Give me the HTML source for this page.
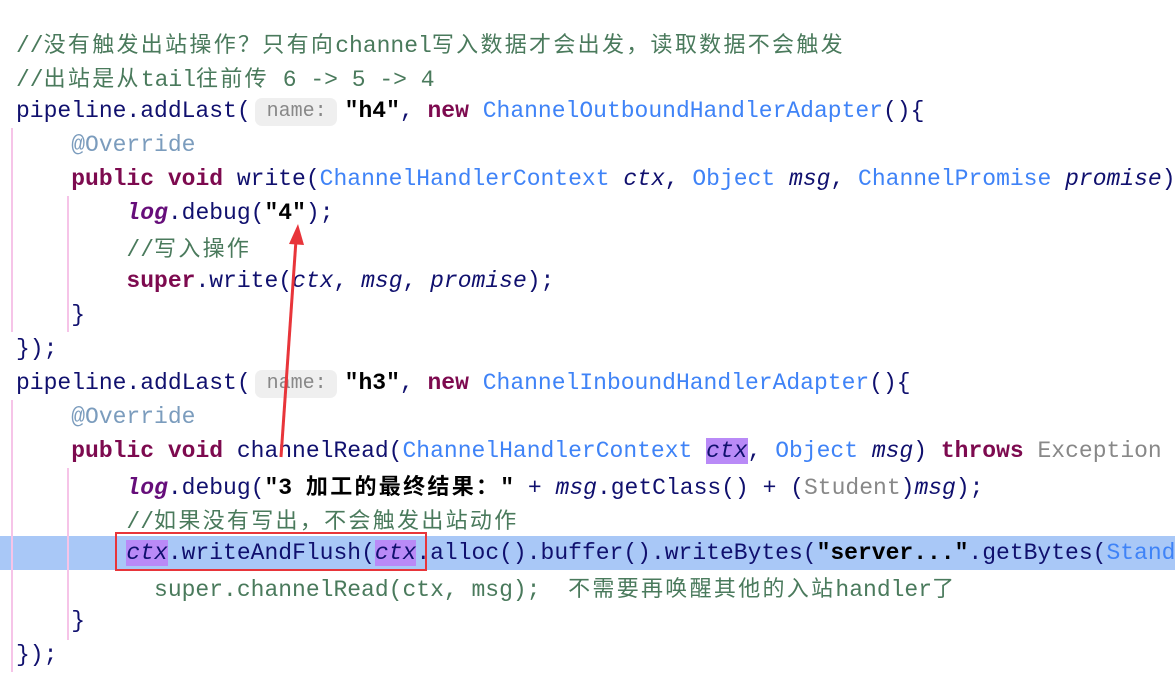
<!DOCTYPE html>
<html><head><meta charset="utf-8"><style>
body{margin:0;width:1175px;height:674px;background:#fff;position:relative;overflow:hidden;font-family:"Liberation Mono","Noto Sans CJK SC",monospace;font-size:23px;color:#10106e}
.l{position:absolute;left:16px;width:1159px;overflow:hidden;height:34px;line-height:34px;white-space:pre}
.k{color:#7d0a4f;font-weight:bold}.c{color:#3f83f7}.s{color:#000;font-weight:bold}.a{color:#7b9cbd}.i{font-style:italic}.lg{color:#660e7a;font-style:italic;font-weight:bold}
.cm{color:#4a7a5c}.z{font-family:"Noto Sans CJK SC",sans-serif;letter-spacing:2.3px;font-size:22px}
.h{display:inline-block;background:#efefef;color:#888;border-radius:7px;font-size:20px;line-height:28px;padding:0 10px 0 12px;margin:0 8px 0 4px;vertical-align:1px}
.g{position:absolute;width:2px;background:#f6c4e8}
.gr{color:#888}
</style></head><body>
<div style="position:absolute;left:0;top:536px;width:1175px;height:34px;background:#a9c8f7"></div>
<div class="g" style="left:11px;top:128px;height:204px"></div>
<div class="g" style="left:67px;top:196px;height:136px"></div>
<div class="g" style="left:11px;top:400px;height:272px"></div>
<div class="g" style="left:67px;top:468px;height:172px"></div>
<div class="l cm" style="top:26px">//<span class="z">没有触发出站操作？只有向</span>channel<span class="z">写入数据才会出发，读取数据不会触发</span></div>
<div class="l cm" style="top:60px">//<span class="z">出站是从</span>tail<span class="z">往前传</span> 6 -&gt; 5 -&gt; 4</div>
<div class="l" style="top:94px">pipeline.addLast(<span class="h">name:</span><span class="s">"h4"</span>, <span class="k">new</span> <span class="c">ChannelOutboundHandlerAdapter</span>(){</div>
<div class="l a" style="top:128px">    @Override</div>
<div class="l" style="top:162px">    <span class="k">public void</span> write(<span class="c">ChannelHandlerContext</span> <span class="i">ctx</span>, <span class="c">Object</span> <span class="i">msg</span>, <span class="c">ChannelPromise</span> <span class="i">promise</span>)</div>
<div class="l" style="top:196px">        <span class="lg">log</span>.debug(<span class="s">"4"</span>);</div>
<div class="l cm" style="top:230px">        //<span class="z">写入操作</span></div>
<div class="l" style="top:264px">        <span class="k">super</span>.write(<span class="i">ctx</span>, <span class="i">msg</span>, <span class="i">promise</span>);</div>
<div class="l" style="top:298px">    }</div>
<div class="l" style="top:332px">});</div>
<div class="l" style="top:366px">pipeline.addLast(<span class="h">name:</span><span class="s">"h3"</span>, <span class="k">new</span> <span class="c">ChannelInboundHandlerAdapter</span>(){</div>
<div class="l a" style="top:400px">    @Override</div>
<div class="l" style="top:434px">    <span class="k">public void</span> channelRead(<span class="c">ChannelHandlerContext</span> <span class="i" style="background:#b98af7">ctx</span>, <span class="c">Object</span> <span class="i">msg</span>) <span class="k">throws</span> <span class="gr">Exception</span></div>
<div class="l" style="top:468px">        <span class="lg">log</span>.debug(<span class="s">"3 <span class="z">加工的最终结果：</span>"</span> + <span class="i">msg</span>.getClass() + (<span class="gr">Student</span>)<span class="i">msg</span>);</div>
<div class="l cm" style="top:502px">        //<span class="z">如果没有写出，不会触发出站动作</span></div>
<div class="l" style="top:536px">        <span class="i" style="background:#b98af7">ctx</span>.writeAndFlush(<span class="i" style="background:#b98af7">ctx</span>.alloc().buffer().writeBytes(<span class="s">"server..."</span>.getBytes(<span class="c">StandardCharsets</span></div>
<div class="l cm" style="top:570px">          super.channelRead(ctx, msg);  <span class="z">不需要再唤醒其他的入站</span>handler<span class="z">了</span></div>
<div class="l" style="top:604px">    }</div>
<div class="l" style="top:638px">});</div>
<div style="position:absolute;left:115px;top:532px;width:308px;height:35px;border:2px solid #e8353a"></div>
<svg style="position:absolute;left:0;top:0" width="1175" height="674">
<line x1="281" y1="457" x2="296" y2="240" stroke="#e8353a" stroke-width="3"/>
<polygon points="298,224 289,244 304,245" fill="#e8353a"/>
</svg>
</body></html>
